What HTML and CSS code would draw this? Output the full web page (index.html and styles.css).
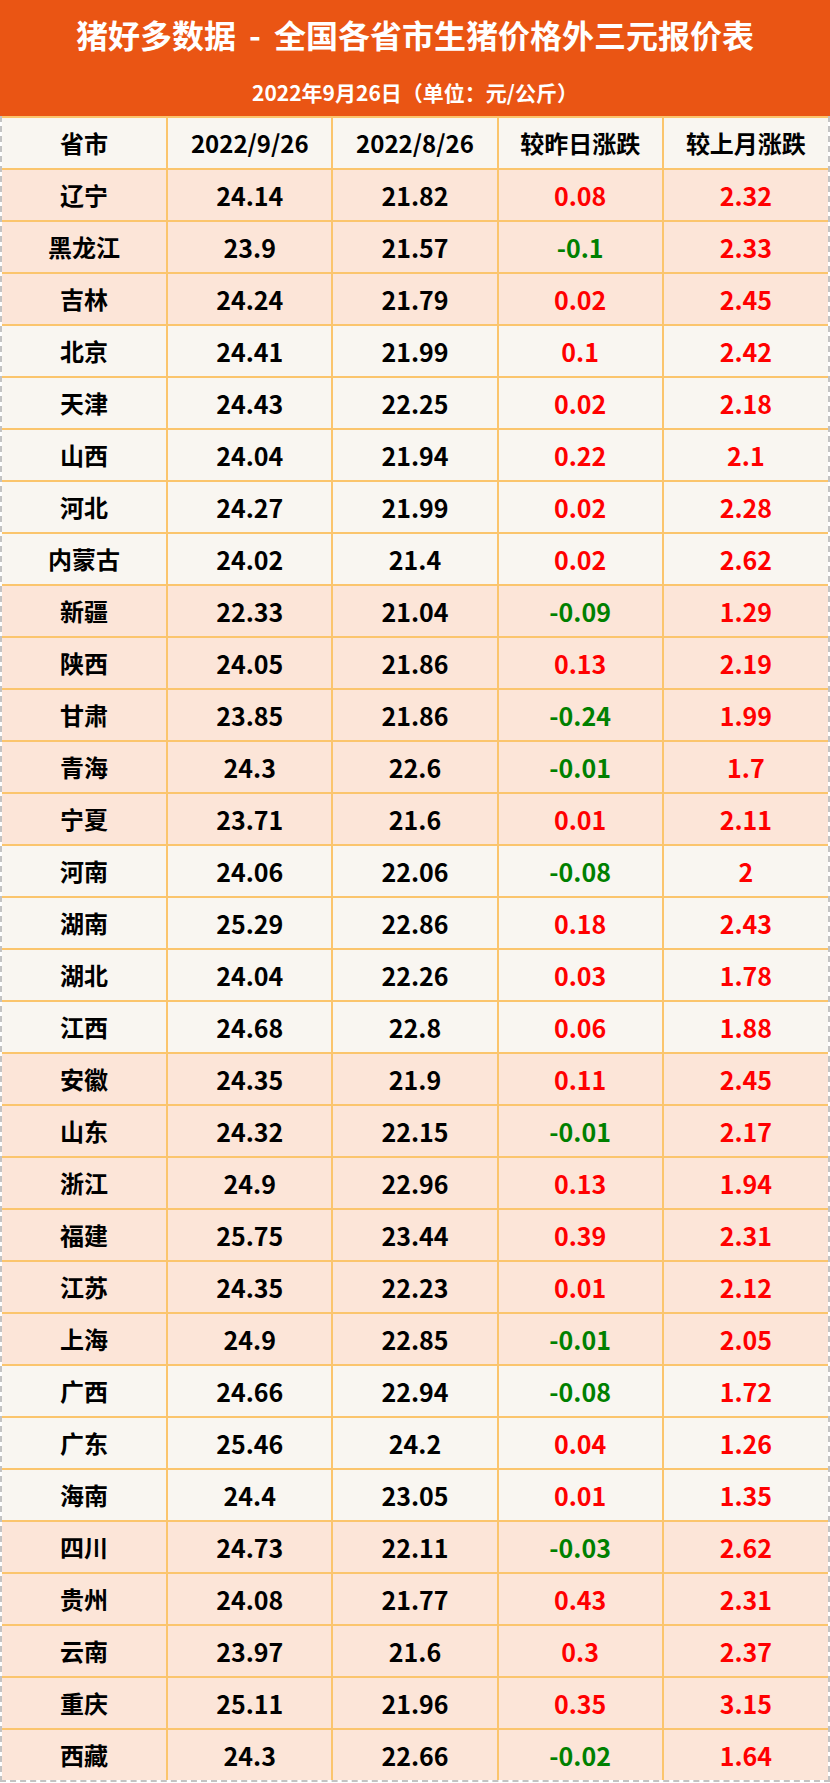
FILE: index.html
```html
<!DOCTYPE html>
<html lang="zh-CN">
<head>
<meta charset="utf-8">
<title>猪好多数据 - 全国各省市生猪价格外三元报价表</title>
<link rel="stylesheet" href="styles.css">
</head>
<body>
<div class="sheet">
  <header class="banner">
    <h1 class="title">猪好多数据 - 全国各省市生猪价格外三元报价表</h1>
    <p class="subtitle">2022年9月26日（单位：元/公斤）</p>
  </header>
  <div class="table-wrap">
    <table class="prices">
      <thead>
        <tr class="head"><th>省市</th><th>2022/9/26</th><th>2022/8/26</th><th>较昨日涨跌</th><th>较上月涨跌</th></tr>
      </thead>
      <tbody>
        <tr class="peach"><td>辽宁</td><td>24.14</td><td>21.82</td><td class="up">0.08</td><td class="up">2.32</td></tr>
        <tr class="peach"><td>黑龙江</td><td>23.9</td><td>21.57</td><td class="down">-0.1</td><td class="up">2.33</td></tr>
        <tr class="peach"><td>吉林</td><td>24.24</td><td>21.79</td><td class="up">0.02</td><td class="up">2.45</td></tr>
        <tr class="cream"><td>北京</td><td>24.41</td><td>21.99</td><td class="up">0.1</td><td class="up">2.42</td></tr>
        <tr class="cream"><td>天津</td><td>24.43</td><td>22.25</td><td class="up">0.02</td><td class="up">2.18</td></tr>
        <tr class="cream"><td>山西</td><td>24.04</td><td>21.94</td><td class="up">0.22</td><td class="up">2.1</td></tr>
        <tr class="cream"><td>河北</td><td>24.27</td><td>21.99</td><td class="up">0.02</td><td class="up">2.28</td></tr>
        <tr class="cream"><td>内蒙古</td><td>24.02</td><td>21.4</td><td class="up">0.02</td><td class="up">2.62</td></tr>
        <tr class="peach"><td>新疆</td><td>22.33</td><td>21.04</td><td class="down">-0.09</td><td class="up">1.29</td></tr>
        <tr class="peach"><td>陕西</td><td>24.05</td><td>21.86</td><td class="up">0.13</td><td class="up">2.19</td></tr>
        <tr class="peach"><td>甘肃</td><td>23.85</td><td>21.86</td><td class="down">-0.24</td><td class="up">1.99</td></tr>
        <tr class="peach"><td>青海</td><td>24.3</td><td>22.6</td><td class="down">-0.01</td><td class="up">1.7</td></tr>
        <tr class="peach"><td>宁夏</td><td>23.71</td><td>21.6</td><td class="up">0.01</td><td class="up">2.11</td></tr>
        <tr class="cream"><td>河南</td><td>24.06</td><td>22.06</td><td class="down">-0.08</td><td class="up">2</td></tr>
        <tr class="cream"><td>湖南</td><td>25.29</td><td>22.86</td><td class="up">0.18</td><td class="up">2.43</td></tr>
        <tr class="cream"><td>湖北</td><td>24.04</td><td>22.26</td><td class="up">0.03</td><td class="up">1.78</td></tr>
        <tr class="cream"><td>江西</td><td>24.68</td><td>22.8</td><td class="up">0.06</td><td class="up">1.88</td></tr>
        <tr class="peach"><td>安徽</td><td>24.35</td><td>21.9</td><td class="up">0.11</td><td class="up">2.45</td></tr>
        <tr class="peach"><td>山东</td><td>24.32</td><td>22.15</td><td class="down">-0.01</td><td class="up">2.17</td></tr>
        <tr class="peach"><td>浙江</td><td>24.9</td><td>22.96</td><td class="up">0.13</td><td class="up">1.94</td></tr>
        <tr class="peach"><td>福建</td><td>25.75</td><td>23.44</td><td class="up">0.39</td><td class="up">2.31</td></tr>
        <tr class="peach"><td>江苏</td><td>24.35</td><td>22.23</td><td class="up">0.01</td><td class="up">2.12</td></tr>
        <tr class="peach"><td>上海</td><td>24.9</td><td>22.85</td><td class="down">-0.01</td><td class="up">2.05</td></tr>
        <tr class="cream"><td>广西</td><td>24.66</td><td>22.94</td><td class="down">-0.08</td><td class="up">1.72</td></tr>
        <tr class="cream"><td>广东</td><td>25.46</td><td>24.2</td><td class="up">0.04</td><td class="up">1.26</td></tr>
        <tr class="cream"><td>海南</td><td>24.4</td><td>23.05</td><td class="up">0.01</td><td class="up">1.35</td></tr>
        <tr class="peach"><td>四川</td><td>24.73</td><td>22.11</td><td class="down">-0.03</td><td class="up">2.62</td></tr>
        <tr class="peach"><td>贵州</td><td>24.08</td><td>21.77</td><td class="up">0.43</td><td class="up">2.31</td></tr>
        <tr class="peach"><td>云南</td><td>23.97</td><td>21.6</td><td class="up">0.3</td><td class="up">2.37</td></tr>
        <tr class="peach"><td>重庆</td><td>25.11</td><td>21.96</td><td class="up">0.35</td><td class="up">3.15</td></tr>
        <tr class="peach"><td>西藏</td><td>24.3</td><td>22.66</td><td class="down">-0.02</td><td class="up">1.64</td></tr>
      </tbody>
    </table>
  </div>
</div>
</body>
</html>
```
FILE: styles.css
```css
html, body {
  margin: 0;
  padding: 0;
  background: #ffffff;
}

body {
  font-family: "Noto Sans CJK SC", "Noto Sans", sans-serif;
  font-weight: 700;
  color: #000000;
}

.sheet {
  width: 830px;
}

.banner {
  background: #ea5514;
  color: #ffffff;
  height: 116px;
  text-align: center;
}

.title {
  margin: 0;
  font-size: 32px;
  line-height: 68px;
  font-weight: 700;
  word-spacing: 0.18em;
}

.subtitle {
  margin: 0;
  font-size: 21px;
  line-height: 48px;
  font-weight: 700;
}

.table-wrap {
  border-left: 2px dashed #c3c3c3;
  border-right: 2px dashed #c3c3c3;
  border-bottom: 2px dashed #c3c3c3;
}

.prices {
  width: 100%;
  border-collapse: collapse;
  table-layout: fixed;
}

.prices th,
.prices td {
  height: 50px;
  padding: 0;
  text-align: center;
  vertical-align: middle;
  font-size: 24px;
  font-weight: 700;
  line-height: 50px;
  border-top: 2px solid #fbc56d;
  border-left: 2px solid #fbc56d;
}

.prices th:first-child,
.prices td:first-child {
  border-left: none;
}

.head {
  background: #f9f6f1;
}

.peach {
  background: #fce5d8;
}

.cream {
  background: #f9f6f1;
}

.prices td:nth-child(n+2) {
  font-size: 25px;
}

.up {
  color: #ff0000;
}

.down {
  color: #008000;
}
```
